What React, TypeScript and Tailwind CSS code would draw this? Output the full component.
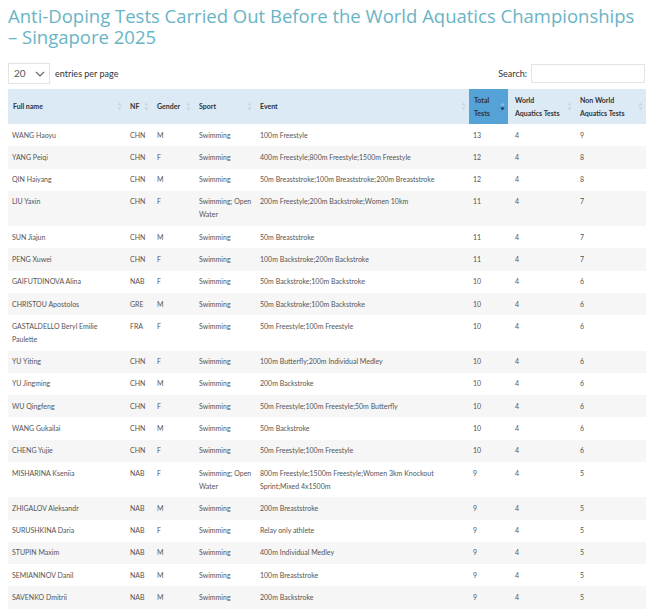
import React from 'react'

type Row = {
  name: string
  nf: string
  gender: string
  sport: string
  event: string
  total: number
  wa: number
  nwa: number
}

const rows: Row[] = [
  { name: 'WANG Haoyu', nf: 'CHN', gender: 'M', sport: 'Swimming', event: '100m Freestyle', total: 13, wa: 4, nwa: 9 },
  { name: 'YANG Peiqi', nf: 'CHN', gender: 'F', sport: 'Swimming', event: '400m Freestyle;800m Freestyle;1500m Freestyle', total: 12, wa: 4, nwa: 8 },
  { name: 'QIN Haiyang', nf: 'CHN', gender: 'M', sport: 'Swimming', event: '50m Breaststroke;100m Breaststroke;200m Breaststroke', total: 12, wa: 4, nwa: 8 },
  { name: 'LIU Yaxin', nf: 'CHN', gender: 'F', sport: 'Swimming; Open Water', event: '200m Freestyle;200m Backstroke;Women 10km', total: 11, wa: 4, nwa: 7 },
  { name: 'SUN Jiajun', nf: 'CHN', gender: 'M', sport: 'Swimming', event: '50m Breaststroke', total: 11, wa: 4, nwa: 7 },
  { name: 'PENG Xuwei', nf: 'CHN', gender: 'F', sport: 'Swimming', event: '100m Backstroke;200m Backstroke', total: 11, wa: 4, nwa: 7 },
  { name: 'GAIFUTDINOVA Alina', nf: 'NAB', gender: 'F', sport: 'Swimming', event: '50m Backstroke;100m Backstroke', total: 10, wa: 4, nwa: 6 },
  { name: 'CHRISTOU Apostolos', nf: 'GRE', gender: 'M', sport: 'Swimming', event: '50m Backstroke;100m Backstroke', total: 10, wa: 4, nwa: 6 },
  { name: 'GASTALDELLO Beryl Emilie Paulette', nf: 'FRA', gender: 'F', sport: 'Swimming', event: '50m Freestyle;100m Freestyle', total: 10, wa: 4, nwa: 6 },
  { name: 'YU Yiting', nf: 'CHN', gender: 'F', sport: 'Swimming', event: '100m Butterfly;200m Individual Medley', total: 10, wa: 4, nwa: 6 },
  { name: 'YU Jingming', nf: 'CHN', gender: 'M', sport: 'Swimming', event: '200m Backstroke', total: 10, wa: 4, nwa: 6 },
  { name: 'WU Qingfeng', nf: 'CHN', gender: 'F', sport: 'Swimming', event: '50m Freestyle;100m Freestyle;50m Butterfly', total: 10, wa: 4, nwa: 6 },
  { name: 'WANG Gukailai', nf: 'CHN', gender: 'M', sport: 'Swimming', event: '50m Backstroke', total: 10, wa: 4, nwa: 6 },
  { name: 'CHENG Yujie', nf: 'CHN', gender: 'F', sport: 'Swimming', event: '50m Freestyle;100m Freestyle', total: 10, wa: 4, nwa: 6 },
  { name: 'MISHARINA Kseniia', nf: 'NAB', gender: 'F', sport: 'Swimming; Open Water', event: '800m Freestyle;1500m Freestyle;Women 3km Knockout Sprint;Mixed 4x1500m', total: 9, wa: 4, nwa: 5 },
  { name: 'ZHIGALOV Aleksandr', nf: 'NAB', gender: 'M', sport: 'Swimming', event: '200m Breaststroke', total: 9, wa: 4, nwa: 5 },
  { name: 'SURUSHKINA Daria', nf: 'NAB', gender: 'F', sport: 'Swimming', event: 'Relay only athlete', total: 9, wa: 4, nwa: 5 },
  { name: 'STUPIN Maxim', nf: 'NAB', gender: 'M', sport: 'Swimming', event: '400m Individual Medley', total: 9, wa: 4, nwa: 5 },
  { name: 'SEMIANINOV Danil', nf: 'NAB', gender: 'M', sport: 'Swimming', event: '100m Breaststroke', total: 9, wa: 4, nwa: 5 },
  { name: 'SAVENKO Dmitrii', nf: 'NAB', gender: 'M', sport: 'Swimming', event: '200m Backstroke', total: 9, wa: 4, nwa: 5 },
]

function SortIcon({ active }: { active?: boolean }) {
  return (
    <svg width="5" height="9" viewBox="0 0 5 9" className="shrink-0">
      <path d="M2.5 0.5 L4.6 3.6 L0.4 3.6 Z" fill={active ? '#8fbfe0' : '#c9d6df'} />
      <path d="M2.5 8.5 L4.6 5.4 L0.4 5.4 Z" fill={active ? '#1c3550' : '#c9d6df'} />
    </svg>
  )
}

function Th({ label, active, className = '' }: { label: React.ReactNode; active?: boolean; className?: string }) {
  return (
    <th className={`py-[4.5px] pl-[5px] pr-[3px] text-left align-middle font-bold ${active ? 'bg-[#55a2d6]' : ''} ${className}`}>
      <div className="flex items-center justify-between gap-1">
        <span className="leading-[13px]">{label}</span>
        <SortIcon active={active} />
      </div>
    </th>
  )
}

export default function App() {
  return (
    <div className="w-[650px] bg-white pl-[8px] pr-[4px] font-['Lato',sans-serif] text-[#555]">
      <h1 className="pt-[5px] font-['Open_Sans',sans-serif] text-[18.5px] font-normal leading-[21px] text-[#69b4c6]">
        Anti-Doping Tests Carried Out Before the World Aquatics Championships – Singapore 2025
      </h1>

      <div className="mt-[16px] flex items-center justify-between">
        <div className="flex items-center gap-[5px]">
          <div className="flex h-[21px] w-[42px] items-center justify-between border border-[#e3e3e3] pl-[5px] pr-[4px] text-[10px] text-[#555]">
            <span>20</span>
            <svg width="10" height="6" viewBox="0 0 10 6">
              <path d="M1 1 L5 5 L9 1" fill="none" stroke="#666" strokeWidth="1.1" />
            </svg>
          </div>
          <span className="text-[9px] text-[#333]">entries per page</span>
        </div>
        <div className="flex items-center gap-[4px] pr-[1px]">
          <span className="text-[9px] text-[#333]">Search:</span>
          <div className="h-[19px] w-[114px] border border-[#e3e3e3]" />
        </div>
      </div>

      <table className="mt-[5px] w-[638px] table-fixed border-collapse text-[7px]">
        <colgroup>
          <col className="w-[117px]" />
          <col className="w-[27px]" />
          <col className="w-[42px]" />
          <col className="w-[61px]" />
          <col className="w-[214px]" />
          <col className="w-[39px]" />
          <col className="w-[67px]" />
          <col className="w-[71px]" />
        </colgroup>
        <thead className="bg-[#dceaf6] text-[#333]">
          <tr>
            <Th label="Full name" />
            <Th label="NF" />
            <Th label="Gender" />
            <Th label="Sport" />
            <Th label="Event" />
            <Th label={<>Total<br />Tests</>} active />
            <Th label={<>World<br />Aquatics Tests</>} className="pl-[7px]" />
            <Th label={<>Non World<br />Aquatics Tests</>} />
          </tr>
        </thead>
        <tbody>
          {rows.map((r, i) => (
            <tr key={i} className={i % 2 === 1 ? 'bg-[#f6f6f6]' : 'bg-white'}>
              <td className="py-[4.65px] pl-[4px] pr-[10px] align-top leading-[13px]">{r.name}</td>
              <td className="py-[4.65px] pl-[5px] align-top leading-[13px]">{r.nf}</td>
              <td className="py-[4.65px] pl-[5px] align-top leading-[13px]">{r.gender}</td>
              <td className="py-[4.65px] pl-[5px] align-top leading-[13px]">{r.sport}</td>
              <td className="py-[4.65px] pl-[5px] pr-[20px] align-top leading-[13px]">{r.event}</td>
              <td className="py-[4.65px] pl-[4px] align-top leading-[13px]">{r.total}</td>
              <td className="py-[4.65px] pl-[7px] align-top leading-[13px]">{r.wa}</td>
              <td className="py-[4.65px] pl-[5px] align-top leading-[13px]">{r.nwa}</td>
            </tr>
          ))}
        </tbody>
      </table>
    </div>
  )
}
